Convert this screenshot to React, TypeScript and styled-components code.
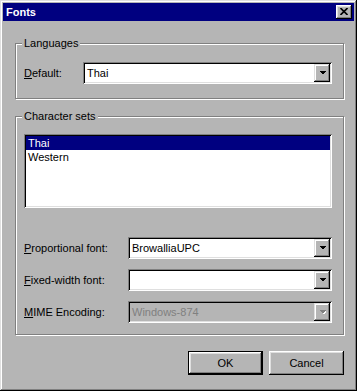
import React from "react";
import styled, { createGlobalStyle } from "styled-components";

const GRAY = "#b5b5b5";
const DARK = "#808080";
const LIGHT = "#dfdfdf";
const NAVY = "#000080";

const GlobalStyle = createGlobalStyle`
  html, body {
    margin: 0;
    padding: 0;
    background: ${GRAY};
  }
  body {
    font-family: "Liberation Sans", Arial, sans-serif;
    font-size: 11px;
    color: #000;
  }
  * {
    box-sizing: border-box;
  }
`;

function App() {
  return (
    <>
      <GlobalStyle />
      <Window>
        <TitleBar>
          <Title>Fonts</Title>
          <CloseButton aria-label="Close">
            <svg width="8" height="7" viewBox="0 0 8 7">
              <path d="M0.5 0 L7.5 7 M7.5 0 L0.5 7" stroke="#000" strokeWidth="1.6" />
            </svg>
          </CloseButton>
        </TitleBar>

        <Body>
          <Group $top={16} $padTop={12} $padBottom={14}>
            <Legend>Languages</Legend>
            <Row>
              <Label $width={59}>
                <u>D</u>efault:
              </Label>
              <Combo $width={249} value="Thai" />
            </Row>
          </Group>

          <Group $top={11} $padTop={11} $padBottom={11}>
            <Legend>Character sets</Legend>
            <ListBox>
              <ListItem $selected>Thai</ListItem>
              <ListItem>Western</ListItem>
            </ListBox>
            <Rows>
              <Row>
                <Label $width={104}>
                  <u>P</u>roportional font:
                </Label>
                <Combo $width={204} value="BrowalliaUPC" />
              </Row>
              <Row>
                <Label $width={104}>
                  <u>F</u>ixed-width font:
                </Label>
                <Combo $width={204} value="" />
              </Row>
              <Row>
                <Label $width={104}>
                  <u>M</u>IME Encoding:
                </Label>
                <Combo $width={204} value="Windows-874" disabled />
              </Row>
            </Rows>
          </Group>

          <ButtonRow>
            <PushButton $default>OK</PushButton>
            <PushButton>Cancel</PushButton>
          </ButtonRow>
        </Body>
      </Window>
    </>
  );
}

function Combo({ $width, value, disabled }: { $width: number; value: string; disabled?: boolean }) {
  return (
    <ComboBox $width={$width} $disabled={disabled}>
      <ComboText $disabled={disabled}>{value}</ComboText>
      <DropButton>
        <svg width="7" height="5" viewBox="0 0 7 5" shapeRendering="crispEdges">
          {disabled && <path d="M1 1 H8 L4.5 4.5 Z" fill="#fff" />}
          <path d="M0 0 H7 L3.5 3.5 Z" fill={disabled ? DARK : "#000"} />
        </svg>
      </DropButton>
    </ComboBox>
  );
}

export default App;

const Window = styled.div`
  width: 357px;
  height: 391px;
  padding: 3px;
  background: ${GRAY};
  box-shadow: inset -1px -1px #000, inset 1px 1px ${LIGHT}, inset -2px -2px ${DARK},
    inset 2px 2px #fff;
  display: flex;
  flex-direction: column;
`;

const TitleBar = styled.div`
  height: 18px;
  background: ${NAVY};
  display: flex;
  align-items: center;
  justify-content: space-between;
  padding: 0 2px 0 3px;
`;

const Title = styled.span`
  color: #fff;
  font-weight: bold;
  font-size: 11px;
  line-height: 13px;
`;

const CloseButton = styled.button`
  width: 16px;
  height: 14px;
  padding: 0;
  border: none;
  background: ${GRAY};
  box-shadow: inset -1px -1px #000, inset 1px 1px #fff, inset -2px -2px ${DARK},
    inset 2px 2px ${LIGHT};
  display: flex;
  align-items: center;
  justify-content: center;
  padding-bottom: 1px;
`;

const Body = styled.div`
  display: flex;
  flex-direction: column;
  padding-left: 12px;
`;

const Group = styled.fieldset<{ $top: number; $padTop: number; $padBottom: number }>`
  margin: ${(p) => p.$top}px 0 0 0;
  width: 329px;
  min-width: 0;
  border: 1px solid ${DARK};
  padding: ${(p) => p.$padTop}px 11px ${(p) => p.$padBottom}px 8px;
  box-shadow: inset 1px 1px #fff, 1px 1px #fff;
`;

const Legend = styled.legend`
  padding: 0 2px;
  margin-left: -2px;
  line-height: 13px;
  background: ${GRAY};
`;

const Rows = styled.div`
  display: flex;
  flex-direction: column;
  gap: 10px;
  margin-top: 29px;
`;

const Row = styled.div`
  display: flex;
  align-items: center;
`;

const Label = styled.span<{ $width: number }>`
  width: ${(p) => p.$width}px;
  flex: none;
  white-space: nowrap;
`;

const ComboBox = styled.div<{ $width: number; $disabled?: boolean }>`
  width: ${(p) => p.$width}px;
  height: 22px;
  padding: 2px;
  display: flex;
  background: ${(p) => (p.$disabled ? GRAY : "#fff")};
  box-shadow: inset 1px 1px ${DARK}, inset -1px -1px #fff, inset 2px 2px #000,
    inset -2px -2px ${LIGHT};
`;

const ComboText = styled.span<{ $disabled?: boolean }>`
  flex: 1;
  padding-left: 2px;
  line-height: 18px;
  color: ${(p) => (p.$disabled ? DARK : "#000")};
  white-space: nowrap;
  overflow: hidden;
`;

const DropButton = styled.div`
  width: 16px;
  height: 18px;
  flex: none;
  background: ${GRAY};
  box-shadow: inset -1px -1px #000, inset 1px 1px ${LIGHT}, inset -2px -2px ${DARK},
    inset 2px 2px #fff;
  display: flex;
  align-items: center;
  justify-content: center;
  padding-top: 1px;
`;

const ListBox = styled.div`
  width: 308px;
  height: 74px;
  padding: 2px;
  background: #fff;
  box-shadow: inset 1px 1px ${DARK}, inset -1px -1px #fff, inset 2px 2px #000,
    inset -2px -2px ${LIGHT};
`;

const ListItem = styled.div<{ $selected?: boolean }>`
  height: 14px;
  line-height: 14px;
  padding-left: 2px;
  background: ${(p) => (p.$selected ? NAVY : "transparent")};
  color: ${(p) => (p.$selected ? "#fff" : "#000")};
`;

const ButtonRow = styled.div`
  width: 329px;
  display: flex;
  justify-content: flex-end;
  gap: 6px;
  margin-top: 16px;
`;

const PushButton = styled.button<{ $default?: boolean }>`
  width: 75px;
  height: 24px;
  padding: 0;
  border: ${(p) => (p.$default ? "1px solid #000" : "none")};
  background: ${GRAY};
  font-family: "Liberation Sans", Arial, sans-serif;
  font-size: 11px;
  color: #000;
  box-shadow: inset -1px -1px #000, inset 1px 1px #fff, inset -2px -2px ${DARK},
    inset 2px 2px ${LIGHT};
`;
